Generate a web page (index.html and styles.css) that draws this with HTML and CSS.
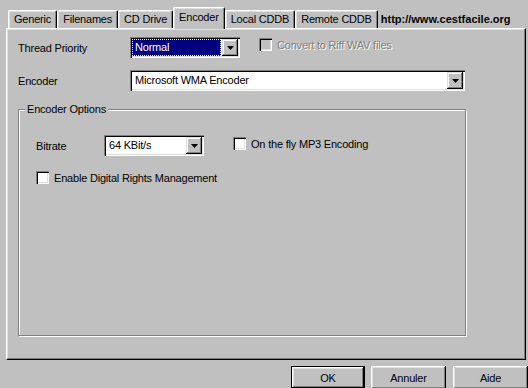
FILE: index.html
```html
<!DOCTYPE html>
<html lang="fr">
<head>
    <meta charset="UTF-8">
    <meta name="viewport" content="width=device-width, initial-scale=1.0">
    <title>Encoder Options</title>
    <link rel="stylesheet" href="styles.css">
</head>
<body>
    <div class="dialog">
        <div class="tab-row">
            <div class="tab">Generic</div>
            <div class="tab">Filenames</div>
            <div class="tab">CD Drive</div>
            <div class="tab active">Encoder</div>
            <div class="tab">Local CDDB</div>
            <div class="tab">Remote CDDB</div>
            <div class="site-url">http://www.cestfacile.org</div>
        </div>

        <div class="tab-panel">
            <div class="form-row">
                <span class="field-label">Thread Priority</span>
                <div class="combo combo-priority">
                    <span class="combo-value focused">Normal</span>
                    <span class="combo-btn"><svg width="7" height="4" viewBox="0 0 7 4"><polygon points="0,0 7,0 3.5,4" fill="#000"/></svg></span>
                </div>
                <label class="check disabled riff-check">
                    <span class="check-box"></span>
                    <span class="check-text">Convert to Riff WAV files</span>
                </label>
            </div>

            <div class="form-row encoder-row">
                <span class="field-label">Encoder</span>
                <div class="combo combo-encoder">
                    <span class="combo-value">Microsoft WMA Encoder</span>
                    <span class="combo-btn"><svg width="7" height="4" viewBox="0 0 7 4"><polygon points="0,0 7,0 3.5,4" fill="#000"/></svg></span>
                </div>
            </div>

            <fieldset class="group-box">
                <legend>Encoder Options</legend>

                <div class="group-body">
                    <div class="form-row">
                        <span class="field-label bitrate-label">Bitrate</span>
                        <div class="combo combo-bitrate">
                            <span class="combo-value">64 KBit/s</span>
                            <span class="combo-btn"><svg width="7" height="4" viewBox="0 0 7 4"><polygon points="0,0 7,0 3.5,4" fill="#000"/></svg></span>
                        </div>
                        <label class="check mp3-check">
                            <span class="check-box"></span>
                            <span class="check-text">On the fly MP3 Encoding</span>
                        </label>
                    </div>

                    <label class="check drm-check">
                        <span class="check-box"></span>
                        <span class="check-text">Enable Digital Rights Management</span>
                    </label>
                </div>
            </fieldset>
        </div>

        <div class="button-row">
            <button class="win-btn default">OK</button>
            <button class="win-btn">Annuler</button>
            <button class="win-btn">Aide</button>
        </div>
    </div>
</body>
</html>
```

FILE: styles.css
```css
body {
    margin: 0;
    background: #c0c0c0;
    font-family: "Liberation Sans", Arial, sans-serif;
    font-size: 11px;
    letter-spacing: -0.2px;
    color: #000;
}

.dialog {
    padding: 7px 1px 0 6px;
}

/* Tabs */
.tab-row {
    display: flex;
    align-items: flex-end;
    height: 21px;
    margin-left: 2px;
    position: relative;
    z-index: 1;
}

.tab {
    height: 17px;
    line-height: 17px;
    padding: 0 5px;
    border-top: 1px solid #fff;
    border-left: 1px solid #fff;
    border-right: 1px solid #000;
    border-radius: 2px 2px 0 0;
    box-shadow: inset -1px 0 0 #808080, inset 1px 1px 0 #dfdfdf;
    white-space: nowrap;
}

.tab.active {
    height: 21px;
    line-height: 18px;
    margin-bottom: -1px;
    background: #c0c0c0;
}

.site-url {
    align-self: center;
    margin-left: 3px;
    margin-top: 2px;
    font-weight: bold;
    letter-spacing: 0;
    white-space: nowrap;
}

/* Panel */
.tab-panel {
    width: 520px;
    height: 332px;
    padding: 8px 0 0 11px;
    box-sizing: border-box;
    border-top: 1px solid #fff;
    border-left: 1px solid #fff;
    border-right: 1px solid #000;
    border-bottom: 1px solid #000;
    box-shadow: inset -1px -1px 0 #808080, inset 1px 1px 0 #dfdfdf;
}

.form-row {
    display: flex;
    align-items: center;
    height: 21px;
}

.encoder-row {
    margin-top: 12px;
}

.field-label {
    width: 112px;
    flex: none;
}

.bitrate-label {
    width: 68px;
}

/* Combo boxes */
.combo {
    display: flex;
    align-items: center;
    height: 21px;
    box-sizing: border-box;
    padding: 2px;
    background: #fff;
    box-shadow: inset 1px 1px 0 #808080, inset 2px 2px 0 #000, inset -1px -1px 0 #fff, inset -2px -2px 0 #dfdfdf;
    flex: none;
}

.combo-priority {
    width: 110px;
}

.combo-encoder {
    width: 335px;
}

.combo-bitrate {
    width: 100px;
}

.combo-value {
    flex: 1;
    height: 17px;
    line-height: 15px;
    padding: 0 2px;
    margin-right: 1px;
    box-sizing: border-box;
    border: 1px solid transparent;
    white-space: nowrap;
    overflow: hidden;
}

.combo-value.focused {
    background: #000080;
    color: #fff;
    border: 1px dotted #ffff80;
}

.combo-btn {
    width: 16px;
    height: 17px;
    flex: none;
    display: flex;
    align-items: center;
    justify-content: center;
    background: #c0c0c0;
    box-shadow: inset -1px -1px 0 #000, inset 1px 1px 0 #dfdfdf, inset -2px -2px 0 #808080, inset 2px 2px 0 #fff;
}

/* Checkboxes */
.check {
    display: flex;
    align-items: center;
    height: 13px;
}

.check-box {
    width: 13px;
    height: 13px;
    flex: none;
    box-sizing: border-box;
    background: #fff;
    box-shadow: inset 1px 1px 0 #808080, inset 2px 2px 0 #000, inset -1px -1px 0 #fff, inset -2px -2px 0 #dfdfdf;
}

.check-text {
    margin-left: 5px;
    white-space: nowrap;
}

.check.disabled .check-box {
    background: #c0c0c0;
}

.check.disabled .check-text {
    color: #808080;
    text-shadow: 1px 1px 0 #fff;
}

.riff-check {
    margin-left: 19px;
    margin-top: -6px;
}

.mp3-check {
    margin-left: 29px;
    margin-top: -4px;
}

.drm-check {
    margin-top: 15px;
}

/* Group box */
.group-box {
    width: 448px;
    height: 233px;
    box-sizing: border-box;
    margin: 12px 0 0 0;
    padding: 0;
    border: 1px solid #808080;
    box-shadow: inset 1px 1px 0 #fff, 1px 1px 0 #fff;
}

.group-box legend {
    margin-left: 6px;
    padding: 0 2px;
    background: #c0c0c0;
    line-height: 13px;
}

.group-body {
    padding: 19px 0 0 17px;
}

/* Bottom buttons */
.button-row {
    display: flex;
    justify-content: flex-end;
    gap: 7px;
    margin-top: 6px;
    margin-right: -1px;
}

.win-btn {
    width: 75px;
    height: 23px;
    padding: 0;
    border: none;
    background: #c0c0c0;
    font-family: inherit;
    font-size: 11px;
    letter-spacing: inherit;
    color: #000;
    box-shadow: inset -1px -1px 0 #000, inset 1px 1px 0 #fff, inset -2px -2px 0 #808080, inset 2px 2px 0 #dfdfdf;
}

.win-btn.default {
    width: 74px;
    margin-right: -1px;
    box-shadow: inset 0 0 0 1px #000, inset -2px -2px 0 #000, inset 2px 2px 0 #fff, inset -3px -3px 0 #808080, inset 3px 3px 0 #dfdfdf;
}
```
